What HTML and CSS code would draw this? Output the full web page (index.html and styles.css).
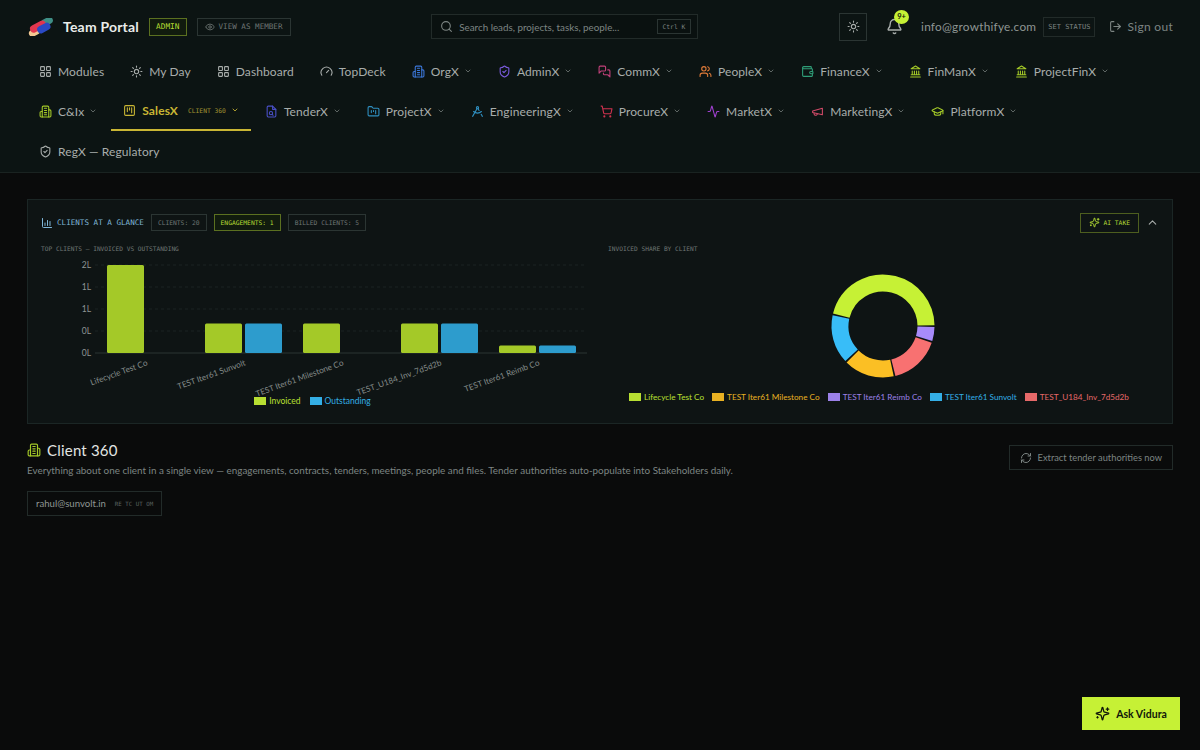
FILE: index.html
```html
<!DOCTYPE html>
<html lang="en">
<head>
    <meta charset="UTF-8">
    <meta name="viewport" content="width=device-width, initial-scale=1.0">
    <title>Team Portal</title>
    <link rel="stylesheet" href="styles.css">
</head>
<body>
    <!-- icon sprite -->
    <svg class="sprite" xmlns="http://www.w3.org/2000/svg">
        <symbol id="i-grid" viewBox="0 0 24 24"><rect x="3" y="3" width="7" height="7" rx="1"/><rect x="14" y="3" width="7" height="7" rx="1"/><rect x="14" y="14" width="7" height="7" rx="1"/><rect x="3" y="14" width="7" height="7" rx="1"/></symbol>
        <symbol id="i-sun" viewBox="0 0 24 24"><circle cx="12" cy="12" r="4"/><path d="M12 2v2M12 20v2M4.93 4.93l1.41 1.41M17.66 17.66l1.41 1.41M2 12h2M20 12h2M6.34 17.66l-1.41 1.41M19.07 4.93l-1.41 1.41"/></symbol>
        <symbol id="i-gauge" viewBox="0 0 24 24"><path d="m12 14 4-4"/><path d="M3.34 19a10 10 0 1 1 17.32 0"/></symbol>
        <symbol id="i-building" viewBox="0 0 24 24"><path d="M6 22V4a2 2 0 0 1 2-2h8a2 2 0 0 1 2 2v18Z"/><path d="M6 12H4a2 2 0 0 0-2 2v6a2 2 0 0 0 2 2h2"/><path d="M18 9h2a2 2 0 0 1 2 2v9a2 2 0 0 1-2 2h-2"/><path d="M10 6h4M10 10h4M10 14h4M10 18h4"/></symbol>
        <symbol id="i-shield" viewBox="0 0 24 24"><path d="M20 13c0 5-3.5 7.5-7.66 8.95a1 1 0 0 1-.67-.01C7.5 20.5 4 18 4 13V6a1 1 0 0 1 1-1c2 0 4.5-1.2 6.24-2.72a1.17 1.17 0 0 1 1.52 0C14.51 3.81 17 5 19 5a1 1 0 0 1 1 1z"/><path d="m9 12 2 2 4-4"/></symbol>
        <symbol id="i-chat" viewBox="0 0 24 24"><path d="M14 9a2 2 0 0 1-2 2H6l-4 4V4a2 2 0 0 1 2-2h8a2 2 0 0 1 2 2z"/><path d="M18 9h2a2 2 0 0 1 2 2v11l-4-4h-6a2 2 0 0 1-2-2v-1"/></symbol>
        <symbol id="i-users" viewBox="0 0 24 24"><path d="M16 21v-2a4 4 0 0 0-4-4H6a4 4 0 0 0-4 4v2"/><circle cx="9" cy="7" r="4"/><path d="M22 21v-2a4 4 0 0 0-3-3.87"/><path d="M16 3.13a4 4 0 0 1 0 7.75"/></symbol>
        <symbol id="i-wallet" viewBox="0 0 24 24"><path d="M19 7V4a1 1 0 0 0-1-1H5a2 2 0 0 0 0 4h15a1 1 0 0 1 1 1v4h-3a2 2 0 0 0 0 4h3a1 1 0 0 0 1-1v-2a1 1 0 0 0-1-1"/><path d="M3 5v14a2 2 0 0 0 2 2h15a1 1 0 0 0 1-1v-4"/></symbol>
        <symbol id="i-bank" viewBox="0 0 24 24"><path d="M3 22h18M6 18v-7M10 18v-7M14 18v-7M18 18v-7M4 18h16"/><path d="M12 2l8 5H4z"/></symbol>
        <symbol id="i-kanban" viewBox="0 0 24 24"><rect x="3" y="3" width="18" height="18" rx="2"/><path d="M8 7v7M12 7v4M16 7v9"/></symbol>
        <symbol id="i-file" viewBox="0 0 24 24"><path d="M14 2H6a2 2 0 0 0-2 2v16a2 2 0 0 0 2 2h12a2 2 0 0 0 2-2V8z"/><path d="M14 2v6h6"/><circle cx="11" cy="15" r="3"/><path d="m15 19-1.8-1.8"/></symbol>
        <symbol id="i-folder" viewBox="0 0 24 24"><path d="M4 20h16a2 2 0 0 0 2-2V8a2 2 0 0 0-2-2h-7.9a2 2 0 0 1-1.69-.9L9.6 3.9A2 2 0 0 0 7.93 3H4a2 2 0 0 0-2 2v13a2 2 0 0 0 2 2Z"/><path d="M8 10v4M12 10v2M16 10v6"/></symbol>
        <symbol id="i-compass" viewBox="0 0 24 24"><path d="m12.99 6.74 1.93 3.44"/><path d="M19.14 12a10 10 0 0 1-14.27 0"/><path d="m21 21-2.16-3.84"/><path d="m3 21 8.02-14.26"/><circle cx="12" cy="5" r="2"/></symbol>
        <symbol id="i-cart" viewBox="0 0 24 24"><circle cx="8" cy="21" r="1"/><circle cx="19" cy="21" r="1"/><path d="M2.05 2.05h2l2.66 12.42a2 2 0 0 0 2 1.58h9.78a2 2 0 0 0 1.95-1.57l1.65-7.43H5.12"/></symbol>
        <symbol id="i-activity" viewBox="0 0 24 24"><path d="M22 12h-2.48a2 2 0 0 0-1.93 1.46l-2.35 8.36a.25.25 0 0 1-.48 0L9.24 2.18a.25.25 0 0 0-.48 0l-2.35 8.36A2 2 0 0 1 4.49 12H2"/></symbol>
        <symbol id="i-megaphone" viewBox="0 0 24 24"><path d="m3 11 18-5v12L3 14v-3z"/><path d="M11.6 16.8a3 3 0 1 1-5.8-1.6"/></symbol>
        <symbol id="i-cap" viewBox="0 0 24 24"><path d="M21.42 10.92a1 1 0 0 0-.02-1.84L12.83 5.18a2 2 0 0 0-1.66 0L2.6 9.08a1 1 0 0 0 0 1.83l8.57 3.91a2 2 0 0 0 1.66 0z"/><path d="M22 10v6"/><path d="M6 12.5V16a6 3 0 0 0 12 0v-3.5"/></symbol>
        <symbol id="i-chevron" viewBox="0 0 24 24"><path d="m6 9 6 6 6-6"/></symbol>
        <symbol id="i-chevron-up" viewBox="0 0 24 24"><path d="m18 15-6-6-6 6"/></symbol>
        <symbol id="i-search" viewBox="0 0 24 24"><circle cx="11" cy="11" r="8"/><path d="m21 21-4.3-4.3"/></symbol>
        <symbol id="i-eye" viewBox="0 0 24 24"><path d="M2.06 12.35a1 1 0 0 1 0-.7 10.75 10.75 0 0 1 19.88 0 1 1 0 0 1 0 .7 10.75 10.75 0 0 1-19.88 0"/><circle cx="12" cy="12" r="3"/></symbol>
        <symbol id="i-bell" viewBox="0 0 24 24"><path d="M10.27 21a2 2 0 0 0 3.46 0"/><path d="M3.26 15.33A1 1 0 0 0 4 17h16a1 1 0 0 0 .74-1.67C19.41 13.96 18 12.5 18 8A6 6 0 0 0 6 8c0 4.5-1.41 5.96-2.74 7.33"/></symbol>
        <symbol id="i-logout" viewBox="0 0 24 24"><path d="M9 21H5a2 2 0 0 1-2-2V5a2 2 0 0 1 2-2h4"/><path d="m16 17 5-5-5-5"/><path d="M21 12H9"/></symbol>
        <symbol id="i-refresh" viewBox="0 0 24 24"><path d="M3 12a9 9 0 0 1 9-9 9.75 9.75 0 0 1 6.74 2.74L21 8"/><path d="M21 3v5h-5"/><path d="M21 12a9 9 0 0 1-9 9 9.75 9.75 0 0 1-6.74-2.74L3 16"/><path d="M8 16H3v5"/></symbol>
        <symbol id="i-sparkles" viewBox="0 0 24 24"><path d="M9.94 15.5A2 2 0 0 0 8.5 14.06l-6.14-1.58a.5.5 0 0 1 0-.96L8.5 9.94A2 2 0 0 0 9.94 8.5l1.58-6.14a.5.5 0 0 1 .96 0l1.58 6.14a2 2 0 0 0 1.44 1.44l6.14 1.58a.5.5 0 0 1 0 .96l-6.14 1.58a2 2 0 0 0-1.44 1.44l-1.58 6.14a.5.5 0 0 1-.96 0z"/><path d="M20 3v4M22 5h-4M4 17v2M5 18H3"/></symbol>
        <symbol id="i-chart" viewBox="0 0 24 24"><path d="M3 3v16a2 2 0 0 0 2 2h16"/><path d="M8 17v-5M13 17V7M18 17v-8"/></symbol>
    </svg>

    <header class="header">
        <div class="topbar">
            <div class="top-left">
                <div class="brand">
                    <svg class="logo" viewBox="0 0 28 18" xmlns="http://www.w3.org/2000/svg">
                        <g transform="rotate(-28 14 9)">
                            <rect x="15" y="3.5" width="13" height="7" rx="3.5" fill="#3f8f86"/>
                            <rect x="0" y="7" width="12" height="7" rx="3.5" fill="#f3c892"/>
                            <rect x="3" y="3.5" width="17" height="7.5" rx="3.7" fill="#e2364f"/>
                            <rect x="9" y="7.5" width="14" height="7.5" rx="3.7" fill="#2a49c4"/>
                        </g>
                    </svg>
                    <span class="brand-name">Team Portal</span>
                </div>
                <span class="tag tag-admin">ADMIN</span>
                <span class="tag tag-view"><svg class="icon ic-10"><use href="#i-eye"/></svg>VIEW AS MEMBER</span>
            </div>

            <div class="search">
                <svg class="icon ic-13"><use href="#i-search"/></svg>
                <span class="search-text">Search leads, projects, tasks, people...</span>
                <span class="kbd">Ctrl K</span>
            </div>

            <div class="top-right">
                <span class="theme-btn"><svg class="icon ic-13"><use href="#i-sun"/></svg></span>
                <span class="bell"><svg class="icon ic-17"><use href="#i-bell"/></svg><span class="badge">9+</span></span>
                <span class="email">info@growthifye.com</span>
                <span class="set-status">SET STATUS</span>
                <span class="signout"><svg class="icon ic-13"><use href="#i-logout"/></svg>Sign out</span>
            </div>
        </div>

        <nav class="nav">
            <a class="nav-item"><svg class="icon"><use href="#i-grid"/></svg>Modules</a>
            <a class="nav-item"><svg class="icon"><use href="#i-sun"/></svg>My Day</a>
            <a class="nav-item"><svg class="icon"><use href="#i-grid"/></svg>Dashboard</a>
            <a class="nav-item"><svg class="icon"><use href="#i-gauge"/></svg>TopDeck</a>
            <a class="nav-item has-chev"><svg class="icon c-blue"><use href="#i-building"/></svg>OrgX<svg class="chev"><use href="#i-chevron"/></svg></a>
            <a class="nav-item has-chev"><svg class="icon c-violet"><use href="#i-shield"/></svg>AdminX<svg class="chev"><use href="#i-chevron"/></svg></a>
            <a class="nav-item has-chev"><svg class="icon c-pink"><use href="#i-chat"/></svg>CommX<svg class="chev"><use href="#i-chevron"/></svg></a>
            <a class="nav-item has-chev"><svg class="icon c-orange"><use href="#i-users"/></svg>PeopleX<svg class="chev"><use href="#i-chevron"/></svg></a>
            <a class="nav-item has-chev"><svg class="icon c-green"><use href="#i-wallet"/></svg>FinanceX<svg class="chev"><use href="#i-chevron"/></svg></a>
            <a class="nav-item has-chev"><svg class="icon c-lime"><use href="#i-bank"/></svg>FinManX<svg class="chev"><use href="#i-chevron"/></svg></a>
            <a class="nav-item has-chev"><svg class="icon c-lime"><use href="#i-bank"/></svg>ProjectFinX<svg class="chev"><use href="#i-chevron"/></svg></a>
            <span class="nav-break"></span>
            <a class="nav-item has-chev"><svg class="icon c-lime"><use href="#i-building"/></svg>C&amp;Ix<svg class="chev"><use href="#i-chevron"/></svg></a>
            <a class="nav-item has-chev active"><svg class="icon"><use href="#i-kanban"/></svg>SalesX<span class="nav-sub">CLIENT 360</span><svg class="chev"><use href="#i-chevron"/></svg></a>
            <a class="nav-item has-chev"><svg class="icon c-indigo"><use href="#i-file"/></svg>TenderX<svg class="chev"><use href="#i-chevron"/></svg></a>
            <a class="nav-item has-chev"><svg class="icon c-sky"><use href="#i-folder"/></svg>ProjectX<svg class="chev"><use href="#i-chevron"/></svg></a>
            <a class="nav-item has-chev"><svg class="icon c-sky"><use href="#i-compass"/></svg>EngineeringX<svg class="chev"><use href="#i-chevron"/></svg></a>
            <a class="nav-item has-chev"><svg class="icon c-red"><use href="#i-cart"/></svg>ProcureX<svg class="chev"><use href="#i-chevron"/></svg></a>
            <a class="nav-item has-chev"><svg class="icon c-purple"><use href="#i-activity"/></svg>MarketX<svg class="chev"><use href="#i-chevron"/></svg></a>
            <a class="nav-item has-chev"><svg class="icon c-rose"><use href="#i-megaphone"/></svg>MarketingX<svg class="chev"><use href="#i-chevron"/></svg></a>
            <a class="nav-item has-chev"><svg class="icon c-lime"><use href="#i-cap"/></svg>PlatformX<svg class="chev"><use href="#i-chevron"/></svg></a>
            <span class="nav-break"></span>
            <a class="nav-item"><svg class="icon"><use href="#i-shield"/></svg>RegX — Regulatory</a>
        </nav>
    </header>

    <main class="main">
        <section class="panel">
            <div class="panel-head">
                <span class="panel-title"><svg class="icon ic-12"><use href="#i-chart"/></svg>CLIENTS AT A GLANCE</span>
                <span class="chip">CLIENTS: 20</span>
                <span class="chip chip-on">ENGAGEMENTS: 1</span>
                <span class="chip">BILLED CLIENTS: 5</span>
                <span class="ai-take"><svg class="icon ic-11"><use href="#i-sparkles"/></svg>AI TAKE</span>
                <svg class="icon ic-13 collapse"><use href="#i-chevron-up"/></svg>
            </div>

            <div class="charts">
                <div class="chart-col">
                    <div class="chart-label">TOP CLIENTS — INVOICED VS OUTSTANDING</div>
                    <svg class="bar-chart" viewBox="41 256 551 140" xmlns="http://www.w3.org/2000/svg">
                        <g class="grid-lines">
                            <path d="M95 265H587M95 287H587M95 309H587M95 331H587"/>
                        </g>
                        <path class="axis-line" d="M95 353H587"/>
                        <g class="y-ticks">
                            <text x="91" y="268">2L</text>
                            <text x="91" y="290">1L</text>
                            <text x="91" y="312">1L</text>
                            <text x="91" y="334">0L</text>
                            <text x="91" y="356">0L</text>
                        </g>
                        <g class="bar-inv">
                            <rect x="107" y="265" width="37" height="88" rx="1.5"/>
                            <rect x="205" y="323.5" width="37" height="29.5" rx="1.5"/>
                            <rect x="303" y="323.5" width="37" height="29.5" rx="1.5"/>
                            <rect x="401" y="323.5" width="37" height="29.5" rx="1.5"/>
                            <rect x="499" y="345.5" width="37" height="7.5" rx="1.5"/>
                        </g>
                        <g class="bar-out">
                            <rect x="245" y="323.5" width="37" height="29.5" rx="1.5"/>
                            <rect x="441" y="323.5" width="37" height="29.5" rx="1.5"/>
                            <rect x="539" y="345.5" width="37" height="7.5" rx="1.5"/>
                        </g>
                        <g class="x-ticks">
                            <text transform="translate(148 365) rotate(-20)">Lifecycle Test Co</text>
                            <text transform="translate(246 365) rotate(-20)">TEST Iter61 Sunvolt</text>
                            <text transform="translate(344 365) rotate(-20)">TEST Iter61 Milestone Co</text>
                            <text transform="translate(442 365) rotate(-20)">TEST_U184_Inv_7d5d2b</text>
                            <text transform="translate(540 365) rotate(-20)">TEST Iter61 Reimb Co</text>
                        </g>
                    </svg>
                    <div class="legend legend-bars">
                        <span class="leg c-l1"><i></i>Invoiced</span>
                        <span class="leg c-l4"><i></i>Outstanding</span>
                    </div>
                </div>

                <div class="chart-col">
                    <div class="chart-label">INVOICED SHARE BY CLIENT</div>
                    <svg class="donut" viewBox="0 0 551 140" xmlns="http://www.w3.org/2000/svg">
                        <g fill="none" stroke-width="17">
                            <circle cx="275" cy="70" r="43" pathLength="360" stroke="#c6f135" stroke-dasharray="165 360" transform="rotate(194 275 70)"/>
                            <circle cx="275" cy="70" r="43" pathLength="360" stroke="#a78bfa" stroke-dasharray="16 360" transform="rotate(1 275 70)"/>
                            <circle cx="275" cy="70" r="43" pathLength="360" stroke="#f87171" stroke-dasharray="57 360" transform="rotate(19 275 70)"/>
                            <circle cx="275" cy="70" r="43" pathLength="360" stroke="#fbbf24" stroke-dasharray="57 360" transform="rotate(78 275 70)"/>
                            <circle cx="275" cy="70" r="43" pathLength="360" stroke="#38bdf8" stroke-dasharray="55 360" transform="rotate(137 275 70)"/>
                        </g>
                    </svg>
                    <div class="legend legend-donut">
                        <span class="leg c-l1"><i></i>Lifecycle Test Co</span>
                        <span class="leg c-l2"><i></i>TEST Iter61 Milestone Co</span>
                        <span class="leg c-l3"><i></i>TEST Iter61 Reimb Co</span>
                        <span class="leg c-l4"><i></i>TEST Iter61 Sunvolt</span>
                        <span class="leg c-l5"><i></i>TEST_U184_Inv_7d5d2b</span>
                    </div>
                </div>
            </div>
        </section>

        <section class="page-head">
            <div>
                <h1><svg class="icon ic-14 c-lime"><use href="#i-building"/></svg>Client 360</h1>
                <p>Everything about one client in a single view — engagements, contracts, tenders, meetings, people and files. Tender authorities auto-populate into Stakeholders daily.</p>
            </div>
            <span class="extract"><svg class="icon ic-12"><use href="#i-refresh"/></svg>Extract tender authorities now</span>
        </section>

        <div class="client-input">
            <span>rahul@sunvolt.in</span>
            <span class="flags">RE TC UT OM</span>
        </div>
    </main>

    <a class="ask"><svg class="icon ic-15"><use href="#i-sparkles"/></svg>Ask Vidura</a>
</body>
</html>
```

FILE: styles.css
```css
* {
    box-sizing: border-box;
}

body {
    margin: 0;
    height: 750px;
    overflow: hidden;
    font-family: 'Lato', 'Liberation Sans', sans-serif;
    background: #0a0b0b;
    color: #a8adab;
}

.sprite {
    display: none;
}

.icon {
    width: 13px;
    height: 13px;
    flex: none;
    fill: none;
    stroke: currentColor;
    stroke-width: 2;
    stroke-linecap: round;
    stroke-linejoin: round;
}

.ic-10 { width: 10px; height: 10px; }
.ic-11 { width: 11px; height: 11px; }
.ic-12 { width: 12px; height: 12px; }
.ic-13 { width: 13px; height: 13px; }
.ic-14 { width: 14px; height: 14px; }
.ic-15 { width: 15px; height: 15px; }
.ic-17 { width: 17px; height: 17px; }

.c-blue { color: #3b76d8; }
.c-violet { color: #7c5ce0; }
.c-pink { color: #c2407a; }
.c-orange { color: #e07b39; }
.c-green { color: #2f9e78; }
.c-lime { color: #a4c928; }
.c-indigo { color: #4a50c8; }
.c-sky { color: #2f8fc0; }
.c-red { color: #d0324f; }
.c-purple { color: #a040d0; }
.c-rose { color: #d04a68; }

/* header */
.header {
    background: #0c1413;
    border-bottom: 1px solid #1a2321;
    height: 173px;
    padding: 0 27px;
}

.topbar {
    display: flex;
    justify-content: space-between;
    align-items: center;
    height: 51px;
    padding-top: 2px;
}

.top-left, .top-right, .brand {
    display: flex;
    align-items: center;
}

.logo {
    width: 28px;
    height: 18px;
    margin-right: 8px;
}

.brand-name {
    font-size: 14px;
    font-weight: 700;
    color: #e9ecea;
    letter-spacing: 0.2px;
    margin-right: 10px;
}

.tag {
    display: inline-flex;
    align-items: center;
    height: 18px;
    font-family: 'DejaVu Sans Mono', monospace;
    font-size: 7.8px;
    border: 1px solid #2b3533;
}

.tag-admin {
    padding: 0 6px;
    color: #b4dc34;
    border-color: #5b7020;
    background: #111b0e;
    margin-right: 10px;
}

.tag-view {
    padding: 0 7px;
    gap: 4px;
    font-size: 7.6px;
    color: #6f7775;
}

.search {
    display: flex;
    align-items: center;
    width: 267px;
    height: 25px;
    padding: 0 6px 0 8px;
    gap: 6px;
    border: 1px solid #222b29;
    background: #0a1110;
    color: #7d8583;
}

.search-text {
    flex: 1;
    font-size: 9.8px;
    white-space: nowrap;
}

.kbd {
    font-family: 'DejaVu Sans Mono', monospace;
    font-size: 6.3px;
    border: 1px solid #2b3533;
    padding: 3px 5px;
}

.theme-btn {
    display: flex;
    align-items: center;
    justify-content: center;
    width: 28px;
    height: 28px;
    border: 1px solid #2b3533;
    margin-right: 19px;
}

.bell {
    position: relative;
    display: flex;
    margin-right: 18px;
}

.badge {
    position: absolute;
    top: -8px;
    left: 8px;
    width: 15px;
    height: 14px;
    border-radius: 50%;
    background: #c6f135;
    color: #10160a;
    font-size: 7.5px;
    font-weight: 700;
    line-height: 14px;
    text-align: center;
}

.email {
    font-size: 11.8px;
    letter-spacing: 0.25px;
    color: #8f9694;
    margin-right: 7px;
}

.set-status {
    font-family: 'DejaVu Sans Mono', monospace;
    font-size: 7px;
    color: #7d8583;
    border: 1px solid #222b29;
    padding: 5px 4px;
    margin-right: 14px;
}

.signout {
    display: flex;
    align-items: center;
    gap: 5px;
    font-size: 12px;
    letter-spacing: 0.3px;
    color: #7d8583;
}

/* nav */
.nav {
    display: flex;
    flex-wrap: wrap;
    gap: 0 2px;
}

.nav-break {
    flex-basis: 100%;
    height: 0;
}

.nav-item {
    display: flex;
    align-items: center;
    height: 40px;
    padding: 0 12px;
    gap: 6px;
    font-size: 12px;
    letter-spacing: 0.1px;
    color: #a8adab;
    white-space: nowrap;
}

.chev {
    width: 8px;
    height: 8px;
    margin-left: -1px;
    fill: none;
    stroke: #6f7775;
    stroke-width: 2.5;
    stroke-linecap: round;
    stroke-linejoin: round;
}

.nav-item.active {
    color: #c9b634;
    font-weight: 700;
    border-bottom: 2px solid #c9b634;
}

.nav-item.active .chev {
    stroke: #c9b634;
}

.nav-sub {
    font-family: 'DejaVu Sans Mono', monospace;
    font-size: 6.3px;
    font-weight: 400;
    letter-spacing: 0;
    margin-left: 4px;
    color: #a39532;
}

/* main */
.main {
    padding: 26px 27px 0;
}

.panel {
    height: 225px;
    padding: 14px 13px;
    background: #0e1414;
    border: 1px solid #1b2625;
}

.panel-head {
    display: flex;
    align-items: center;
    height: 17px;
    gap: 7px;
}

.panel-title {
    display: flex;
    align-items: center;
    gap: 4px;
    font-family: 'DejaVu Sans Mono', monospace;
    font-size: 7.6px;
    color: #7fb6d8;
}

.chip {
    height: 17px;
    line-height: 15px;
    padding: 0 6px;
    font-family: 'DejaVu Sans Mono', monospace;
    font-size: 6.3px;
    color: #6f7775;
    border: 1px solid #2b3533;
}

.chip-on {
    color: #b4dc34;
    border-color: #5b7020;
    background: #111b0e;
}

.ai-take {
    display: flex;
    align-items: center;
    gap: 3px;
    height: 20px;
    padding: 0 8px;
    margin-left: auto;
    font-family: 'DejaVu Sans Mono', monospace;
    font-size: 6.3px;
    color: #b4dc34;
    border: 1px solid #4d5e1f;
}

.collapse {
    color: #a8adab;
}

.charts {
    display: grid;
    grid-template-columns: 1fr 1fr;
    gap: 16px;
    margin-top: 12px;
}

.chart-label {
    height: 11px;
    line-height: 11px;
    font-family: 'DejaVu Sans Mono', monospace;
    font-size: 6.2px;
    color: #6f7775;
}

.bar-chart, .donut {
    display: block;
    width: 100%;
    height: 140px;
    margin-top: 2px;
    overflow: visible;
}

.grid-lines path {
    stroke: #1a2322;
    stroke-dasharray: 3 3;
}

.axis-line {
    stroke: #2b3533;
}

.y-ticks text {
    font-size: 8.5px;
    fill: #8f9694;
    text-anchor: end;
}

.bar-inv rect {
    fill: #a4c928;
}

.bar-out rect {
    fill: #2d9ccd;
}

.x-ticks text {
    font-size: 8.2px;
    fill: #858c8a;
    text-anchor: end;
}

.legend {
    display: flex;
    justify-content: center;
    font-size: 8.2px;
    white-space: nowrap;
}

.legend-bars {
    gap: 9px;
    padding-right: 8px;
    font-size: 8.5px;
}

.legend-donut {
    gap: 8px;
    padding-right: 9px;
    margin-top: -4px;
}

.leg {
    display: flex;
    align-items: center;
    gap: 3px;
    opacity: 0.92;
}

.leg i {
    width: 12px;
    height: 8px;
    background: currentColor;
}

.c-l1 { color: #c6f135; }
.c-l2 { color: #fbbf24; }
.c-l3 { color: #a78bfa; }
.c-l4 { color: #38bdf8; }
.c-l5 { color: #f87171; }

/* page heading */
.page-head {
    display: flex;
    justify-content: space-between;
    align-items: flex-start;
    margin-top: 16px;
}

.page-head h1 {
    display: flex;
    align-items: center;
    gap: 6px;
    height: 20px;
    margin: 0;
    font-size: 15px;
    font-weight: 400;
    letter-spacing: 0.2px;
    color: #e2e5e3;
}

.page-head p {
    margin: 4px 0 0;
    font-size: 9.9px;
    line-height: 13px;
    color: #7d8583;
}

.extract {
    display: flex;
    align-items: center;
    gap: 6px;
    height: 25px;
    margin-top: 5px;
    padding: 0 10px;
    font-size: 9.3px;
    color: #7d8583;
    border: 1px solid #222b29;
}

.client-input {
    display: inline-flex;
    align-items: center;
    gap: 9px;
    height: 25px;
    margin-top: 14px;
    padding: 0 8px;
    font-size: 9.6px;
    color: #8f9694;
    border: 1px solid #222b29;
}

.flags {
    font-family: 'DejaVu Sans Mono', monospace;
    font-size: 5.8px;
    color: #5b6361;
}

.ask {
    position: fixed;
    right: 20px;
    bottom: 20px;
    display: flex;
    align-items: center;
    justify-content: center;
    gap: 6px;
    width: 98px;
    height: 33px;
    font-size: 10.5px;
    font-weight: 700;
    color: #10160a;
    background: #c6f135;
}
```
